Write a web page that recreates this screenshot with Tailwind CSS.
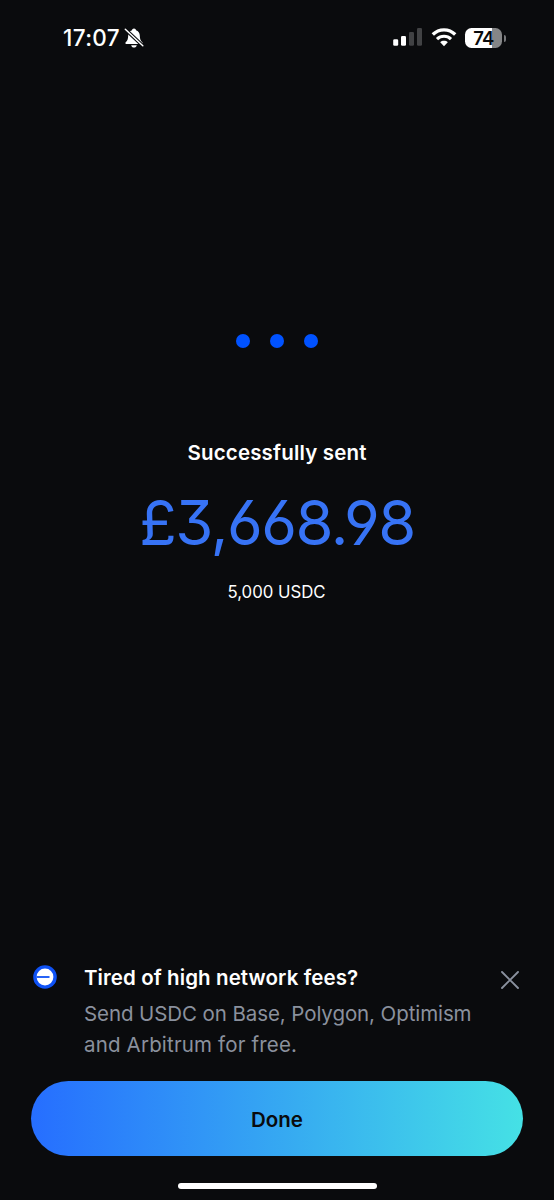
<!DOCTYPE html>
<html lang="en">
<head>
<meta charset="utf-8">
<title>Successfully sent</title>
<script src="https://cdn.jsdelivr.net/npm/@tailwindcss/browser@4"></script>
</head>
<body class="bg-[#0a0b0d] font-['Inter',sans-serif] text-white">
<div class="flex h-[1200px] w-[554px] flex-col overflow-hidden">
  <header class="flex h-[76px] shrink-0 items-center justify-between pr-[48px] pl-[63px]">
    <div class="flex items-center gap-[4px]">
      <span class="text-[22.5px] leading-[28px] font-medium tracking-[0.35px]">17:07</span>
      <svg class="h-[22px] w-[20px]" viewBox="0 0 20 22" fill="none">
        <path d="M10 1.5C8.8 1.5 8.2 2.3 8 3.2C5.6 4 4.3 6 4.2 8.6C4.1 12.3 3.6 13.6 1.7 15.3C1.2 15.8 1.2 17 2.2 17H17.8C18.8 17 18.8 15.8 18.3 15.3C16.4 13.6 15.9 12.3 15.8 8.6C15.7 6 14.4 4 12 3.2C11.8 2.3 11.2 1.5 10 1.5ZM7.2 18.2H12.8C12.5 19.7 11.4 20.5 10 20.5S7.5 19.7 7.2 18.2Z" fill="white"/>
        <path d="M1 2L19 19" stroke="#0a0b0d" stroke-width="3.6"/>
        <path d="M1.3 2.3L18.8 18.8" stroke="white" stroke-width="1.5" stroke-linecap="round"/>
      </svg>
    </div>
    <div class="flex items-center">
      <svg class="h-[20px] w-[29px]" viewBox="0 0 29 20">
        <rect x="0.2" y="11.3" width="5" height="6.4" rx="1.3" fill="white"/>
        <rect x="8" y="8" width="5" height="9.7" rx="1.3" fill="white"/>
        <rect x="16" y="4" width="5" height="13.7" rx="1.3" fill="#414244"/>
        <rect x="24" y="0" width="5" height="17.7" rx="1.3" fill="#414244"/>
      </svg>
      <svg class="ml-[9px] h-[20px] w-[26px]" viewBox="0 0 26 20" fill="none">
        <path d="M1.8 6.5C8 0.2 18 0.2 24.2 6.5" stroke="white" stroke-width="3.3"/>
        <path d="M6 11.1C10 7.3 16 7.3 20 11.1" stroke="white" stroke-width="3.2"/>
        <path d="M9.2 14.2C11.2 12.3 14.8 12.3 16.8 14.2L13 18.2Z" fill="white"/>
      </svg>
      <div class="ml-[8px] flex h-[20px] w-[37px] items-center justify-center rounded-[6.5px] bg-linear-to-r from-white from-74% to-[#858687] to-74% pb-px text-[18.5px] leading-[20px] font-semibold tracking-[-0.6px] text-[#0a0b0d]">74</div>
      <div class="ml-[1.5px] h-[7px] w-[2.5px] rounded-r-full bg-[#77787a]"></div>
    </div>
  </header>

  <main class="flex flex-1 flex-col items-center pt-[258px]">
    <div class="flex gap-[20.4px]">
      <span class="size-[14px] rounded-full bg-[#0052ff]"></span>
      <span class="size-[14px] rounded-full bg-[#0052ff]"></span>
      <span class="size-[14px] rounded-full bg-[#0052ff]"></span>
    </div>
    <h1 class="mt-[90px] text-[20.5px] leading-[30px] font-semibold tracking-[0.17px] whitespace-nowrap">Successfully sent</h1>
    <p class="mt-[19px] text-[61.5px] leading-[72px] font-normal tracking-[-1.45px] whitespace-nowrap text-[#3773f5] [font-feature-settings:'cv03','cv04','cv09']">£3,668.98</p>
    <p class="mt-[21px] mr-[1px] text-[16.8px] leading-[24px] tracking-[-0.03px] whitespace-nowrap">5,000 USDC</p>
  </main>

  <section class="flex h-[118px] shrink-0 items-start pl-[33px]">
    <svg class="mt-[2px] size-[24px] shrink-0" viewBox="0 0 24 24">
      <circle cx="12" cy="12" r="11.8" fill="#0f52f5"/>
      <circle cx="12" cy="12" r="8.4" fill="white"/>
      <path d="M3.5 12H16.5" stroke="#0f52f5" stroke-width="1.8"/>
    </svg>
    <div class="ml-[27px] w-[390px] shrink-0">
      <h2 class="text-[20.5px] leading-[30px] font-semibold tracking-[0.09px] whitespace-nowrap">Tired of high network fees?</h2>
      <p class="mt-[5px] text-[20.5px] leading-[31px] whitespace-nowrap text-[#8a919e]"><span class="tracking-[-0.09px]">Send USDC on Base, Polygon, Optimism</span><br><span class="tracking-[0.17px]">and Arbitrum for free.</span></p>
    </div>
    <svg class="mt-[8px] ml-[27px] size-[18px] shrink-0" viewBox="0 0 18 18">
      <path d="M1 1L17 17M17 1L1 17" stroke="#8a919e" stroke-width="1.9" stroke-linecap="round"/>
    </svg>
  </section>

  <footer class="flex h-[119px] shrink-0 flex-col items-center">
    <button class="h-[75px] w-[492px] rounded-full bg-linear-to-r/srgb from-[#266eff] to-[#45e1e5] pt-[3px] text-[20.5px] font-semibold text-[#0a0b0d]">Done</button>
    <div class="mt-[27px] h-[6px] w-[199px] rounded-full bg-white"></div>
  </footer>
</div>
</body>
</html>
